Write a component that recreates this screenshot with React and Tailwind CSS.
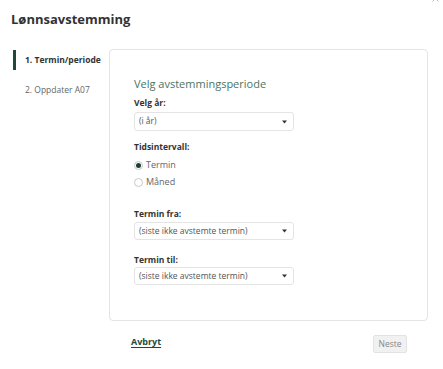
import React from 'react';

function Select({ value, className = '' }) {
  return (
    <div className={`flex h-[18px] w-[160px] items-center justify-between rounded-[3px] border border-[#e4e4e4] bg-white pl-[4px] pr-[6px] text-[8.5px] text-[#555] ${className}`}>
      <span>{value}</span>
      <svg width="5" height="4" viewBox="0 0 5 4">
        <path d="M0 0.5 L5 0.5 L2.5 3.5 Z" fill="#333" />
      </svg>
    </div>
  );
}

function Radio({ label, checked, className = '' }) {
  return (
    <div className={`flex h-[14px] items-center gap-[3px] text-[9px] text-[#666] ${className}`}>
      <span className="flex h-[9px] w-[9px] items-center justify-center rounded-full border border-[#c8c8c8] bg-white">
        {checked && <span className="h-[5px] w-[5px] rounded-full bg-[#1d3f32]" />}
      </span>
      <span>{label}</span>
    </div>
  );
}

export default function App() {
  return (
    <div className="relative h-[369px] w-[443px] overflow-hidden bg-white font-['Open_Sans',sans-serif] text-[#333]">
      <svg className="absolute right-[4px] top-[-5px]" width="7" height="7" viewBox="0 0 7 7">
        <path d="M0.5 0.5 L6.5 6.5 M6.5 0.5 L0.5 6.5" stroke="#bbb" strokeWidth="1" />
      </svg>

      <h1 className="pl-[11px] pt-[10px] text-[13px] font-bold leading-[18px] text-[#333]">Lønnsavstemming</h1>

      <div className="mt-[21px] flex">
        <nav className="w-[109px] shrink-0 whitespace-nowrap pl-[13px]">
          <div className="mt-[1px] flex h-[20px] items-center">
            <span className="h-[20px] w-[3px] bg-[#1f4a3a]" />
            <span className="ml-[9px] text-[8.5px] font-bold text-[#333]">1. Termin/periode</span>
          </div>
          <div className="mt-[10px] flex h-[20px] items-center">
            <span className="ml-[12px] text-[8.5px] text-[#666]">2. Oppdater A07</span>
          </div>
        </nav>

        <div className="shrink-0">
          <div className="h-[272px] w-[319px] rounded-[4px] border border-[#e4e4e4] pl-[24px] pt-[26px]">
            <h2 className="text-[11px] leading-[16px] text-[#4a7562]">Velg avstemmingsperiode</h2>

            <div className="mt-[5px] text-[8.5px] font-bold leading-[12px]">Velg år:</div>
            <Select value="(i år)" className="mt-[3px] h-[19px]" />

            <div className="mt-[10px] text-[8.5px] font-bold leading-[12px]">Tidsintervall:</div>
            <Radio label="Termin" checked className="mt-[5px]" />
            <Radio label="Måned" className="mt-[3px]" />

            <div className="mt-[19px] text-[8.5px] font-bold leading-[12px]">Termin fra:</div>
            <Select value="(siste ikke avstemte termin)" className="mt-[2px]" />

            <div className="mt-[14px] text-[8.5px] font-bold leading-[12px]">Termin til:</div>
            <Select value="(siste ikke avstemte termin)" className="mt-[1px]" />
          </div>

          <div className="mt-[10px] flex items-center justify-between pl-[22px] pr-[21px]">
            <a className="text-[9px] font-bold text-[#1f4a3a] underline underline-offset-2">Avbryt</a>
            <button className="mt-[4px] h-[18px] w-[34px] rounded-[2px] border border-[#e2e2e2] bg-[#f1f1f1] text-[8.5px] text-[#888]">Neste</button>
          </div>
        </div>
      </div>
    </div>
  );
}
